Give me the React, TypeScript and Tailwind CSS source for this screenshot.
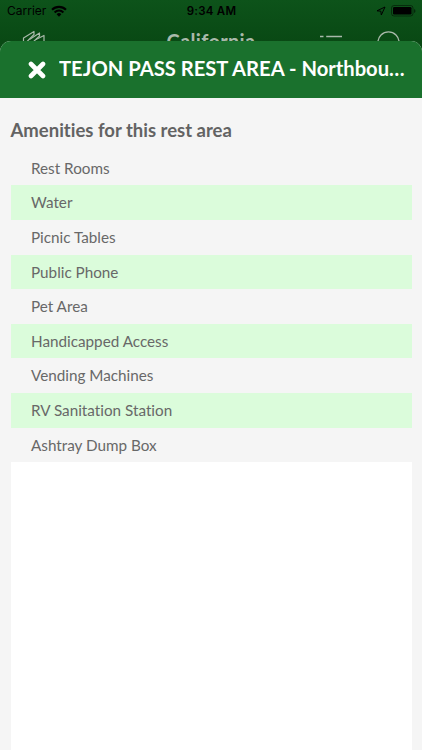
const amenities = [
  'Rest Rooms',
  'Water',
  'Picnic Tables',
  'Public Phone',
  'Pet Area',
  'Handicapped Access',
  'Vending Machines',
  'RV Sanitation Station',
  'Ashtray Dump Box',
];

function StatusBar() {
  return (
    <div className="flex h-[22px] items-center justify-between pr-[6px] pl-[7px] font-['Inter','Liberation_Sans',sans-serif] text-black">
      <div className="flex flex-1 items-center gap-[5px]">
        <span className="text-[12px] leading-[22px]">Carrier</span>
        <svg width="16" height="12" viewBox="0 0 16 12" fill="none" stroke="currentColor" strokeWidth="2.1">
          <path d="M1 4.7a10 10 0 0 1 14 0" />
          <path d="M3.6 7.4a6.2 6.2 0 0 1 8.8 0" />
          <path d="M8 11.8 5.6 9.2a3.4 3.4 0 0 1 4.8 0z" fill="currentColor" stroke="none" />
        </svg>
      </div>
      <span className="text-[11.5px] leading-[22px] font-semibold tracking-[0.25px]">9:34 AM</span>
      <div className="flex flex-1 items-center justify-end gap-[5px]">
        <svg width="10" height="10" viewBox="0 0 10 10" fill="none" stroke="currentColor" strokeLinejoin="round">
          <path d="M9 1 1 4.8l3.8.4L5.300 9z" />
        </svg>
        <svg width="25" height="12" viewBox="0 0 25 12">
          <rect x=".5" y=".5" width="21.500" height="10.500" rx="2.500" fill="none" stroke="#000" strokeOpacity=".45" />
          <rect x="2" y="2" width="18.500" height="7.500" rx="1.300" />
          <path d="M23 4v4q1.500-.5 1.500-2T23 4" fillOpacity=".5" />
        </svg>
      </div>
    </div>
  );
}

function NavBar() {
  return (
    <div className="flex h-[19px] items-start justify-between overflow-hidden pr-[22px] pl-[22px] text-[#a9b9aa]">
      <div className="flex flex-1">
        <svg className="mt-[8px]" width="24" height="22" viewBox="0 0 24 22" fill="none" stroke="currentColor" strokeWidth="1.2" strokeLinejoin="round">
          <path d="M1.500 14V8L12 1.500V4.500L4.500 12" />
          <path d="M7.500 9.500 17.500 3V6L10 13" />
          <path d="M14 9.500 22 5.500V13" />
        </svg>
      </div>
      <span className="mt-[7px] text-[20px] leading-[24px] font-bold tracking-[0.3px]">California</span>
      <div className="flex flex-1 justify-end gap-[35px]">
        <svg className="mt-[13px]" width="22" height="20" viewBox="0 0 22 20" stroke="currentColor" strokeWidth="1.500">
          <path d="M0 1.500h3.500M6.200 1.500H22M0 8.500h3.500M6.200 8.500H22" />
        </svg>
        <svg className="mt-[9px]" width="23" height="23" viewBox="0 0 23 23" fill="none" stroke="currentColor" strokeWidth="1.300">
          <circle cx="11.500" cy="11.500" r="10.600" />
        </svg>
      </div>
    </div>
  );
}

export default function App() {
  return (
    <div className="flex h-[750px] w-[422px] flex-col overflow-hidden bg-[#094914] font-['Lato',sans-serif] [font-variant-ligatures:none]">
      <div className="bg-linear-to-b from-[#0d531a] to-[#094914]">
        <StatusBar />
        <NavBar />
      </div>
      <main className="flex flex-1 flex-col overflow-hidden rounded-t-[11px] bg-[#f5f5f5]">
        <header className="flex h-[57px] items-center bg-[#1a712d] pr-[12px] pl-[28px] text-white">
          <svg className="shrink-0" width="18" height="18" viewBox="0 0 18 18" stroke="currentColor" strokeWidth="4.600" strokeLinecap="round">
            <path d="M3 3l12 12M15 3 3 15" />
          </svg>
          <h1 className="mb-[3px] ml-[13px] flex-1 truncate text-[20.2px] leading-[26px] font-bold">
            TEJON PASS REST AREA - Northbound
          </h1>
        </header>
        <div className="flex flex-1 flex-col px-[10.500px]">
          <h2 className="mt-[20px] text-[18.500px] leading-[24px] font-bold text-[#636363]">Amenities for this rest area</h2>
          <ul className="mt-[8.800px]">
            {amenities.map((name) => (
              <li key={name} className="h-[34.600px] pl-[20.500px] text-[15.250px] leading-[35.600px] text-[#686868] even:bg-[#dbfcdb]">
                {name}
              </li>
            ))}
          </ul>
          <div className="flex-1 bg-white" />
        </div>
      </main>
    </div>
  );
}
